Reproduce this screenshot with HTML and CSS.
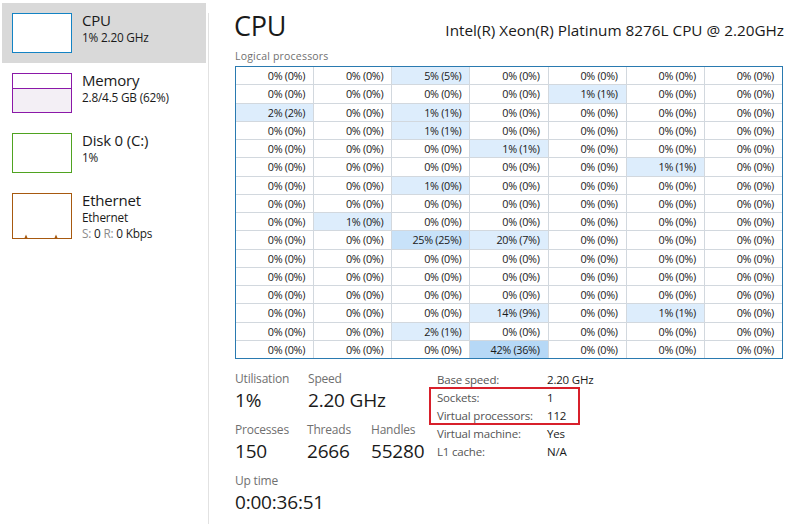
FILE: index.html
```html
<!DOCTYPE html>
<html>
<head>
<meta charset="utf-8">
<link rel="stylesheet" href="styles.css">
</head>
<body>
<div class="app">
  <nav class="sidebar">
    <div class="item selected">
      <div class="thumb thumb-cpu"></div>
      <div class="info"><div class="name">CPU</div><div class="sub">1% 2.20 GHz</div></div>
    </div>
    <div class="item">
      <div class="thumb thumb-mem"><div class="mem-fill"></div></div>
      <div class="info"><div class="name">Memory</div><div class="sub">2.8/4.5 GB (62%)</div></div>
    </div>
    <div class="item">
      <div class="thumb thumb-disk"></div>
      <div class="info"><div class="name">Disk 0 (C:)</div><div class="sub">1%</div></div>
    </div>
    <div class="item item-eth">
      <div class="thumb thumb-eth">
        <svg width="58" height="44" viewBox="0 0 58 44"><path d="M11.5 44 L13 40.5 L14.5 44 Z M41.5 44 L43 40.5 L44.5 44 Z" fill="#a7590f"/></svg>
      </div>
      <div class="info"><div class="name">Ethernet</div><div class="sub">Ethernet</div><div class="sub"><span class="dim">S:</span> 0 <span class="dim">R:</span> 0 Kbps</div></div>
    </div>
  </nav>
  <div class="vline"></div>
  <main class="main">
    <header class="head">
      <h1 class="title">CPU</h1>
      <div class="model">Intel(R) Xeon(R) Platinum 8276L CPU @ 2.20GHz</div>
    </header>
    <div class="grid-label">Logical processors</div>
    <div class="grid" id="grid"></div>
    <section class="stats">
      <div class="left-stats">
        <div class="srow">
          <div class="stat w73"><div class="lbl">Utilisation</div><div class="val">1%</div></div>
          <div class="stat"><div class="lbl">Speed</div><div class="val">2.20 GHz</div></div>
        </div>
        <div class="srow">
          <div class="stat w72"><div class="lbl">Processes</div><div class="val">150</div></div>
          <div class="stat w64"><div class="lbl">Threads</div><div class="val">2666</div></div>
          <div class="stat"><div class="lbl">Handles</div><div class="val">55280</div></div>
        </div>
        <div class="srow">
          <div class="stat"><div class="lbl">Up time</div><div class="val">0:00:36:51</div></div>
        </div>
      </div>
      <div class="specs">
        <div class="spec"><span class="k">Base speed:</span><span class="v">2.20 GHz</span></div>
        <div class="spec"><span class="k">Sockets:</span><span class="v">1</span></div>
        <div class="spec"><span class="k">Virtual processors:</span><span class="v">112</span></div>
        <div class="spec"><span class="k">Virtual machine:</span><span class="v">Yes</span></div>
        <div class="spec"><span class="k">L1 cache:</span><span class="v">N/A</span></div>
        <div class="redbox"></div>
      </div>
    </section>
  </main>
</div>
<script>
var hi = {
  "0,2":["5% (5%)",1],"1,4":["1% (1%)",1],"2,0":["2% (2%)",1],"2,2":["1% (1%)",1],
  "3,2":["1% (1%)",1],"4,3":["1% (1%)",1],"5,5":["1% (1%)",1],"6,2":["1% (0%)",1],
  "8,1":["1% (0%)",1],"9,2":["25% (25%)",2],"9,3":["20% (7%)",1],"13,3":["14% (9%)",1],
  "13,5":["1% (1%)",1],"14,2":["2% (1%)",1],"15,3":["42% (36%)",3]
};
var g = document.getElementById("grid"), html = "";
for (var r = 0; r < 16; r++) {
  for (var c = 0; c < 7; c++) {
    var h = hi[r + "," + c];
    html += '<div class="cell' + (h ? ' h' + h[1] : '') + '">' + (h ? h[0] : '0% (0%)') + '</div>';
  }
}
g.innerHTML = html;
</script>
</body>
</html>
```
FILE: styles.css
```css
* { box-sizing: border-box; }
html, body { margin: 0; padding: 0; background: #fff; }
body {
  font-family: "Open Sans", "Noto Sans", sans-serif;
  color: #1a1a1a;
  width: 799px;
  height: 524px;
  overflow: hidden;
}
.app { display: flex; height: 524px; }

.sidebar { width: 207px; padding: 3px 0 0 2px; flex: none; }
.item { display: flex; height: 60px; padding: 10px 0 0 10px; width: 204px; }
.item.selected { background: #d9d9d9; }
.item-eth { height: 66px; }
.thumb { width: 60px; height: 40px; border: 1px solid; background: #fff; flex: none; }
.thumb-cpu { border-color: #1383c4; }
.thumb-mem { border-color: #8b18a8; display: flex; flex-direction: column; justify-content: flex-end; }
.mem-fill { height: 24px; border-top: 1px solid #8b18a8; background: #f3eff5; }
.thumb-disk { border-color: #4fa320; }
.thumb-eth { border-color: #a7590f; height: 46px; display: flex; align-items: flex-end; }
.thumb-eth svg { display: block; }
.info { margin-left: 10px; }
.name { font-size: 15px; line-height: 18px; margin-top: -2px; letter-spacing: -0.2px; }
.sub { font-size: 11.8px; line-height: 16px; letter-spacing: -0.2px; }
.dim { color: #8a8a8a; }

.vline { width: 1px; background: #e2e2e2; margin-top: 13px; flex: none; margin-left: 1px; }

.main { flex: 1; padding: 6px 15px 0 25px; }
.head { display: flex; justify-content: space-between; align-items: baseline; height: 42px; }
.title { font-size: 27px; font-weight: 400; margin: 0; line-height: 40px; letter-spacing: -0.3px; }
.model { font-size: 15.3px; letter-spacing: 0; }
.grid-label { font-size: 10.5px; color: #707070; line-height: 14px; margin: 1px 0 3px 1px; letter-spacing: 0.2px; }

.grid {
  display: grid;
  grid-template-columns: repeat(7, 1fr);
  grid-template-rows: repeat(16, 1fr);
  gap: 1px;
  background: #d2d8de;
  border: 1px solid #2a7ab0;
  height: 293px;
  margin-left: 1px;
  width: 548px;
}
.cell {
  background: #fff;
  font-size: 10.8px;
  text-align: right;
  padding-right: 8px;
  line-height: 17px;
  letter-spacing: -0.3px;
  color: #1a1a1a;
  white-space: nowrap;
  overflow: hidden;
}
.cell.h1 { background: #ddedfc; }
.cell.h2 { background: #c8e2f9; }
.cell.h3 { background: #b6d8f6; }

.stats { display: flex; margin-top: 12px; margin-left: 1px; }
.left-stats { width: 202px; }
.srow { display: flex; height: 51px; }
.stat { flex: none; }
.w73 { width: 73px; }
.w72 { width: 72px; }
.w64 { width: 64px; }
.lbl { font-size: 12px; color: #707070; line-height: 16px; letter-spacing: -0.2px; }
.val { font-size: 19px; line-height: 26px; letter-spacing: -0.2px; }

.specs { position: relative; padding-top: 0; }
.spec { display: flex; font-size: 11.5px; line-height: 18px; letter-spacing: -0.2px; }
.spec .k { width: 110px; color: #555; }
.spec .v { color: #1a1a1a; }
.redbox {
  position: absolute;
  left: -8px;
  top: 16px;
  width: 151px;
  height: 38px;
  border: 2.5px solid #d8202b;
}
```
